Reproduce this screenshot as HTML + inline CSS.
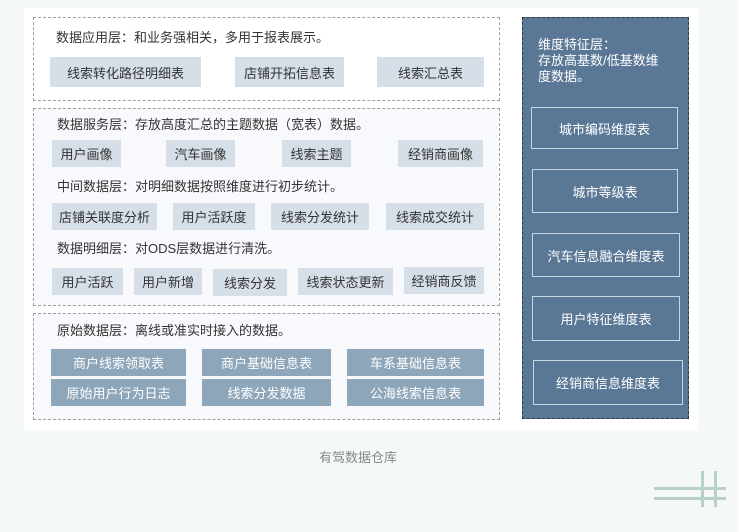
<!DOCTYPE html>
<html><head><meta charset="utf-8"><style>
*{margin:0;padding:0;box-sizing:border-box}
body{width:738px;height:532px;background:#f4f8f7;font-family:"Liberation Sans","Noto Sans CJK SC",sans-serif;position:relative;overflow:hidden;color:#333}
.panel{position:absolute;left:24px;top:8px;width:674px;height:422px;background:#fff}
.box{position:absolute;border:1px dashed #9aa0a6;background:#fff}
.box.g{background:#f7f9fc}
.t{position:absolute;font-size:13px;color:#333;white-space:nowrap;line-height:16px}
.c{position:absolute;background:#d6dfe7;font-size:13px;color:#333;display:flex;align-items:center;justify-content:center;white-space:nowrap}
.d{position:absolute;background:#8ea6b9;font-size:13px;color:#fff;display:flex;align-items:center;justify-content:center}
.r{position:absolute;left:522px;top:17px;width:167px;height:402px;background:#5a7896;border:1px dashed #2c3a48}
.rb{position:absolute;border:1px solid #c8d4e0;color:#fff;font-size:13px;display:flex;align-items:center;justify-content:center}
.rt{position:absolute;left:538px;top:37px;color:#fff;font-size:13px;line-height:16px}
.l{position:absolute;background:#b8d0cb}
</style></head><body>
<div class="panel"></div>
<div class="box" style="left:33px;top:17px;width:467px;height:84px"></div>
<div class="box g" style="left:33px;top:108px;width:467px;height:198px"></div>
<div class="box g" style="left:33px;top:313px;width:467px;height:107px"></div>

<div class="t" style="left:56px;top:30px">数据应用层：和业务强相关，多用于报表展示。</div>
<div class="c" style="left:50px;top:57px;width:151px;height:30px">线索转化路径明细表</div>
<div class="c" style="left:235px;top:57px;width:109px;height:30px">店铺开拓信息表</div>
<div class="c" style="left:377px;top:57px;width:107px;height:30px">线索汇总表</div>

<div class="t" style="left:57px;top:117px">数据服务层：存放高度汇总的主题数据（宽表）数据。</div>
<div class="c" style="left:52px;top:140px;width:69px;height:27px">用户画像</div>
<div class="c" style="left:166px;top:140px;width:69px;height:27px">汽车画像</div>
<div class="c" style="left:282px;top:140px;width:69px;height:27px">线索主题</div>
<div class="c" style="left:398px;top:140px;width:85px;height:27px">经销商画像</div>

<div class="t" style="left:57px;top:179px">中间数据层：对明细数据按照维度进行初步统计。</div>
<div class="c" style="left:52px;top:203px;width:105px;height:27px">店铺关联度分析</div>
<div class="c" style="left:173px;top:203px;width:82px;height:27px">用户活跃度</div>
<div class="c" style="left:271px;top:203px;width:98px;height:27px">线索分发统计</div>
<div class="c" style="left:386px;top:203px;width:98px;height:27px">线索成交统计</div>

<div class="t" style="left:57px;top:241px">数据明细层：对ODS层数据进行清洗。</div>
<div class="c" style="left:52px;top:268px;width:71px;height:27px">用户活跃</div>
<div class="c" style="left:134px;top:268px;width:68px;height:27px">用户新增</div>
<div class="c" style="left:213px;top:269px;width:74px;height:27px">线索分发</div>
<div class="c" style="left:298px;top:268px;width:95px;height:27px">线索状态更新</div>
<div class="c" style="left:404px;top:267px;width:80px;height:27px">经销商反馈</div>

<div class="t" style="left:57px;top:323px">原始数据层：离线或准实时接入的数据。</div>
<div class="d" style="left:51px;top:349px;width:135px;height:27px">商户线索领取表</div>
<div class="d" style="left:202px;top:349px;width:129px;height:27px">商户基础信息表</div>
<div class="d" style="left:347px;top:349px;width:137px;height:27px">车系基础信息表</div>
<div class="d" style="left:51px;top:379px;width:135px;height:27px">原始用户行为日志</div>
<div class="d" style="left:202px;top:379px;width:129px;height:27px">线索分发数据</div>
<div class="d" style="left:347px;top:379px;width:137px;height:27px">公海线索信息表</div>

<div class="r"></div>
<div class="rt">维度特征层：<br>存放高基数/低基数维<br>度数据。</div>
<div class="rb" style="left:531px;top:107px;width:147px;height:42px">城市编码维度表</div>
<div class="rb" style="left:532px;top:169px;width:146px;height:44px">城市等级表</div>
<div class="rb" style="left:532px;top:233px;width:148px;height:44px">汽车信息融合维度表</div>
<div class="rb" style="left:532px;top:296px;width:148px;height:45px">用户特征维度表</div>
<div class="rb" style="left:533px;top:360px;width:150px;height:45px">经销商信息维度表</div>

<div class="t" style="left:319px;top:450px;color:#888;font-size:13px">有驾数据仓库</div>
<div class="l" style="left:654px;top:487px;width:72px;height:3px"></div>
<div class="l" style="left:654px;top:497px;width:72px;height:3px"></div>
<div class="l" style="left:701px;top:471px;width:3px;height:36px"></div>
<div class="l" style="left:714px;top:471px;width:3px;height:36px"></div>
</body></html>
